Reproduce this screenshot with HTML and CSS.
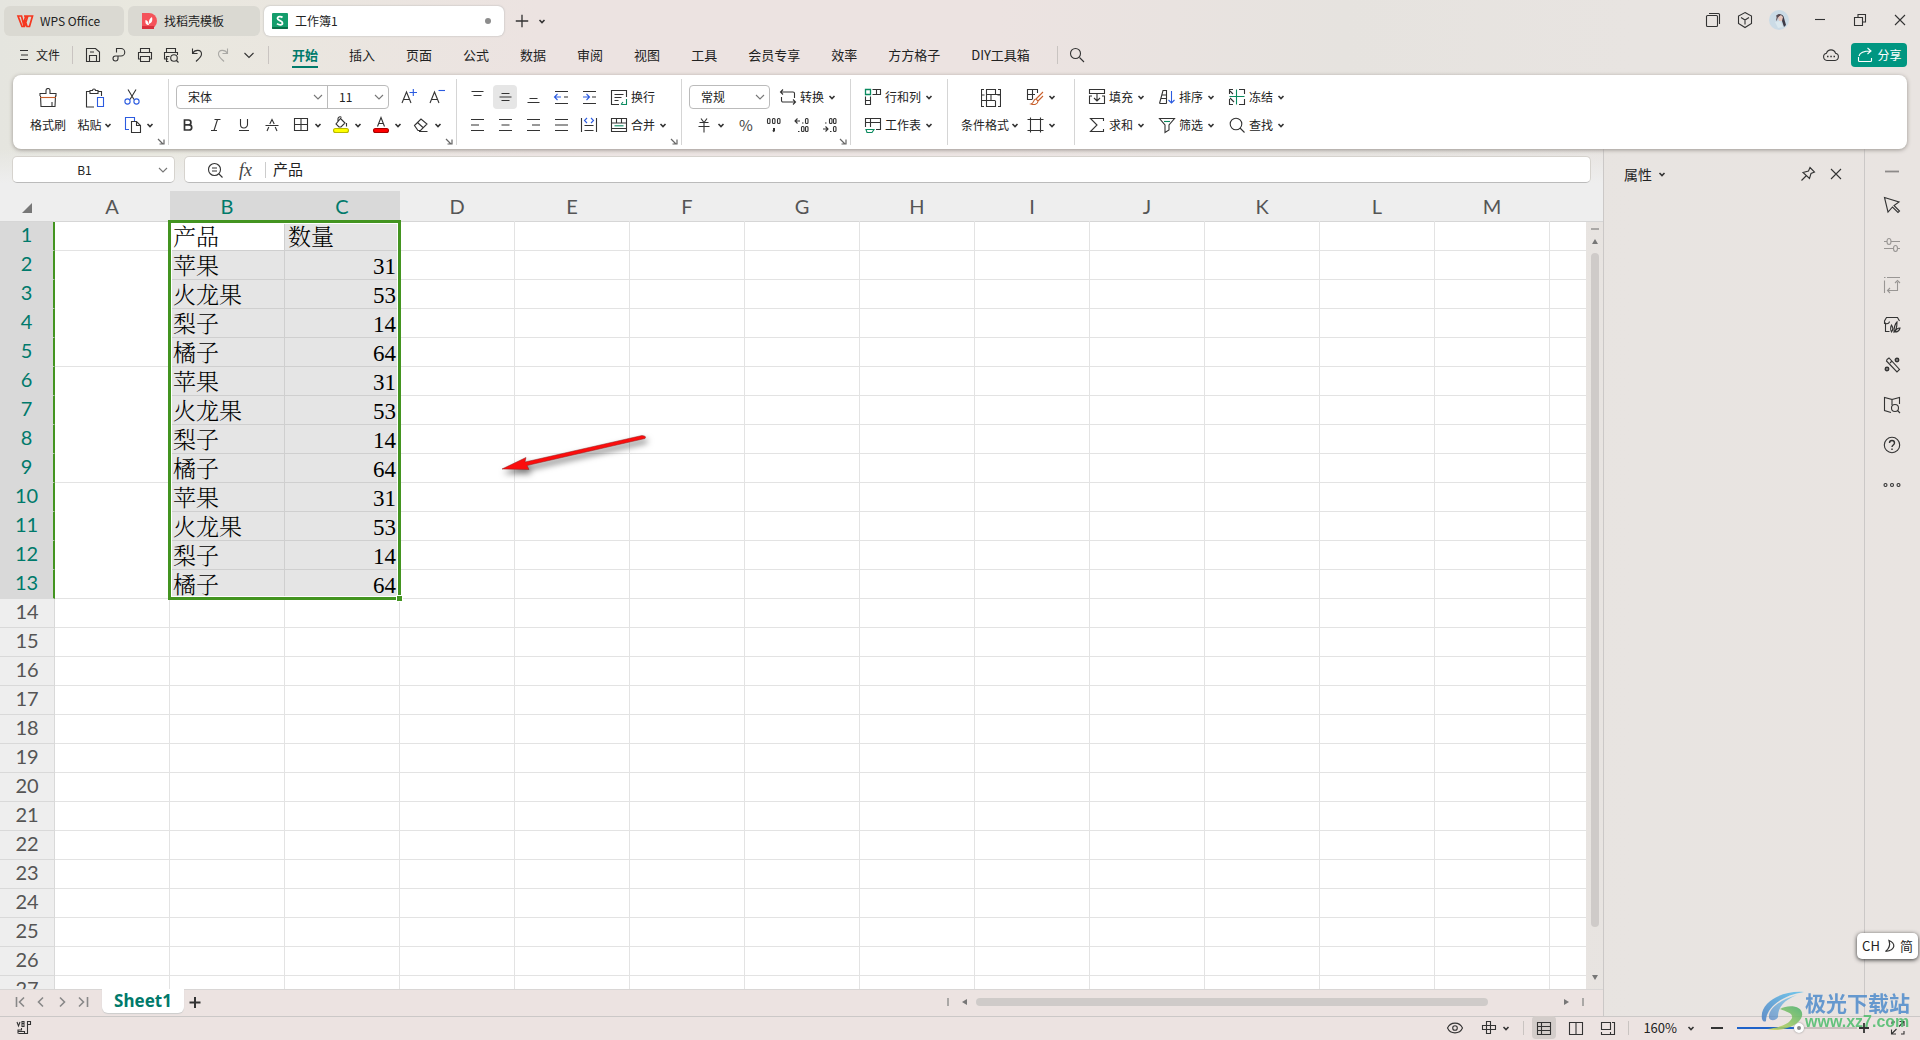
FILE: index.html
```
<!DOCTYPE html>
<html lang="zh-CN">
<head>
<meta charset="utf-8">
<title>工作簿1 - WPS Office</title>
<link rel="stylesheet" href="styles.css">
</head>
<body>
<svg class="sprite" aria-hidden="true">
  <symbol id="chev" viewBox="0 0 10 10"><path d="M2.5 4 5 6.5 7.500 4" fill="none" stroke="#333" stroke-width="1.600"/></symbol>
  <symbol id="chev-thin" viewBox="0 0 10 10"><path d="M1 3l4 4 4-4" fill="none" stroke="#777" stroke-width="1.100"/></symbol>
  <symbol id="launch" viewBox="0 0 8 8"><path d="M1 2l5 5M7 2.500V7H2.500" fill="none" stroke="#666" stroke-width="1.200"/></symbol>
</svg>

<header class="titlebar">
  <button class="wtab wtab-home"><svg class="ic" viewBox="0 0 18 18"><path d="M2 4h3.500l2 8L9.500 5h2l-3 9.500H6zM8 4h8.500l-3 10.500H11L9 8" fill="none" stroke="#f5371f" stroke-width="1.700"/></svg>WPS Office</button>
  <button class="wtab wtab-tpl"><svg class="ic logo" viewBox="0 0 18 18"><path d="M2 1h7a8 8 0 0 1 0 16H2z" fill="#f4535a"/><path d="M2 14h12v3H2z" fill="#d9303c"/><path d="M9 13c-3 0-4-2-3.500-5 2 .5 3 2 3.500 5zM9 12c-.5-4 1-6 3-7 1 4-.5 6-3 7z" fill="#fff"/></svg>找稻壳模板</button>
  <button class="wtab wtab-active"><svg class="ic logo" viewBox="0 0 18 18"><rect x="1" y="1" width="16" height="16" rx="1" fill="#149d6c"/><path d="M1 15h16v1a1 1 0 0 1-1 1H2a1 1 0 0 1-1-1z" fill="#0a7049"/><path d="M11.500 5.500C10 4 6.500 4.200 6.500 6.500S11.500 8.500 11.500 11 8 13.200 6 11.600" fill="none" stroke="#fff" stroke-width="1.800"/></svg><span>工作簿1</span><i class="dot"></i></button>
  <button class="btn" aria-label="新建"><svg class="ic" viewBox="0 0 18 18"><path d="M9 2v14M2 9h14" stroke-width="1.500"/></svg></button>
  <button class="btn-s" aria-label="更多"><svg class="cv"><use href="#chev"/></svg></button>
  <div class="winctl">
    <button class="btn32" aria-label="窗口"><svg class="ic" viewBox="0 0 18 18"><rect x="2.500" y="4.500" width="11" height="11" rx="1"/><path d="M5 2.500h9.500a1 1 0 0 1 1 1V13"/></svg></button>
    <button class="btn32" aria-label="应用"><svg class="ic" viewBox="0 0 18 18"><path d="M9 1.500l6.500 3.500v7.500L9 16.500l-6.500-4V5zM5 6.500L9 9l4-2.500M9 9v4.500"/></svg></button>
    <button class="btn-av" aria-label="账户"><svg viewBox="0 0 20 20" width="20" height="20"><circle cx="10" cy="10" r="10" fill="#cbdbe6"/><path d="M7 6c2-3 8-2 8 2l2 7-2 2-2-6z" fill="#3d3a46"/><path d="M9 7l3-2 2 2-1 4-3 0z" fill="#e7c6bd"/><path d="M8 5l4-1-3 3-1 3-1 1z" fill="#5c4a50"/><path d="M6 12l5-1 3 6-5 1z" fill="#dbe8ee"/></svg></button>
    <button class="btn40" aria-label="最小化"><svg class="ic" viewBox="0 0 18 18"><path d="M4 8.500h10"/></svg></button>
    <button class="btn40" aria-label="还原"><svg class="ic" viewBox="0 0 18 18"><path d="M3.500 6.500h8v8h-8zM7 6V3.500h7.500v7.500H12"/></svg></button>
    <button class="btn40" aria-label="关闭"><svg class="ic" viewBox="0 0 18 18"><path d="M4 4l10 10M14 4L4 14"/></svg></button>
  </div>
</header>

<nav class="menubar">
  <button class="filebtn"><svg class="ic10" viewBox="0 0 10 12"><path d="M1 1.500h8M2 6h7M1 10.500h8"/></svg>文件</button>
  <i class="vsep"></i>
  <div class="quick">
    <button aria-label="保存"><svg class="ic" viewBox="0 0 18 18"><path d="M3 2.500h8.500L15.500 6v9.500h-13v-13zM5.500 15V9.500h7V15M6 6h4"/></svg></button>
    <button aria-label="输出"><svg class="ic" viewBox="0 0 18 18"><path d="M6.500 6.500V2.500h4.500a3.500 3.500 0 0 1 0 7.500H5.500a2.500 2.500 0 1 0 2.500 2.500V10"/></svg></button>
    <button aria-label="打印"><svg class="ic" viewBox="0 0 18 18"><path d="M4.500 6V2.500h9V6M4.500 13h-2V6.500h13V13h-2M4.500 10.500h9v5h-9z"/></svg></button>
    <button aria-label="预览"><svg class="ic" viewBox="0 0 18 18"><path d="M4.500 6V2.500h9V6M6 13H2.500V6.500h13V9M6.500 15.500h-2v-5h3M14.500 14.500l2 2"/><circle cx="12" cy="12" r="3.300"/></svg></button>
    <button aria-label="撤销"><svg class="ic" viewBox="0 0 18 18"><path d="M4.500 2.500v5h5M4.500 7.500C7 3 13.500 3.500 13.500 8c0 3-3 5-5.500 7.500"/></svg></button>
    <button aria-label="恢复"><svg class="ic faint" viewBox="0 0 18 18"><path d="M13.500 2.500v5h-5M13.500 7.500C11 3 4.500 3.500 4.500 8c0 3 3 5 5.500 7.500"/></svg></button>
    <button aria-label="更多命令"><svg class="ic" viewBox="0 0 18 18"><path d="M4.500 7L9 11.500 13.500 7"/></svg></button>
  </div>
  <i class="vsep"></i>
  <div class="mtabs">
    <button class="on">开始</button><button>插入</button><button>页面</button><button>公式</button><button>数据</button><button>审阅</button><button>视图</button><button>工具</button><button>会员专享</button><button>效率</button><button>方方格子</button><button>DIY工具箱</button>
  </div>
  <i class="vsep"></i>
  <button class="search" aria-label="搜索"><svg class="ic" viewBox="0 0 18 18"><circle cx="7.500" cy="7.500" r="5"/><path d="M11.500 11.500L16 16"/></svg></button>
  <button class="cloud" aria-label="云同步"><svg class="ic" viewBox="0 0 18 18"><path d="M5 14.500a3.700 3.700 0 0 1-.5-7.300 4.700 4.700 0 0 1 9 0 3.700 3.700 0 0 1-.5 7.300z"/><path d="M5 10.500h1.500M8.300 10.500h1.500M11.500 10.500H13" stroke-width="1.600"/></svg></button>
  <button class="share"><svg class="ic" viewBox="0 0 18 18"><path d="M2.500 11v3.500a1 1 0 0 0 1 1h11a1 1 0 0 0 1-1V12M3 10c1-4 5-5 11.500-5M11.500 2l3.500 3-3.500 3"/></svg>分享</button>
</nav>

<section class="ribbon">
  <div class="grp g-clip">
    <button class="big w48"><svg class="ic20" viewBox="0 0 20 20"><path d="M2 8V5.500h6V2.500a2 2 0 0 1 4 0v3h6V8l-.5 0L17 18.500H3L2.500 8"/><path d="M2 9.500h16" stroke="#c8602c"/><path d="M14 18v-4"/></svg><span>格式刷</span></button>
    <button class="big w46"><svg class="ic20" viewBox="0 0 20 20"><path d="M9 19H1.500V3.500H5M13 3.500h3.500V8M5 2.500h2.500a1.500 1.500 0 0 1 3 0H13v3H5z"/><path d="M12.500 9.500h6v9h-6z" stroke="#2b5be0"/></svg><span>粘贴<svg class="cv"><use href="#chev"/></svg></span></button>
    <div class="rows">
      <div class="row"><button class="sq" aria-label="剪切"><svg class="ic" viewBox="0 0 18 18"><path d="M5 1.500l6 10M13 1.500l-6 10"/><circle cx="4.500" cy="13.500" r="2.600" stroke="#2b5be0"/><circle cx="13.500" cy="13.500" r="2.600" stroke="#2b5be0"/></svg></button></div>
      <div class="row"><button class="combo" aria-label="复制"><svg class="ic" viewBox="0 0 18 18"><path d="M5 13.500H1.500v-12h9V5" stroke="#2b5be0"/><path d="M7.500 5.500h5l4 4v7h-9zM12.500 5.500v4h4"/></svg><svg class="cv"><use href="#chev"/></svg></button></div>
    </div>
    <button class="launch" aria-label="剪贴板选项"><svg><use href="#launch"/></svg></button>
  </div>

  <div class="grp g-font">
    <div class="rows">
      <div class="row">
        <div class="fontbox">
          <label class="pick p-font"><select aria-label="字体"><option>宋体</option></select><svg class="cvt"><use href="#chev-thin"/></svg></label>
          <label class="pick p-size"><select aria-label="字号"><option>11</option></select><svg class="cvt"><use href="#chev-thin"/></svg></label>
        </div>
        <button class="sq" aria-label="增大字号"><svg class="ic" viewBox="0 0 18 18"><path d="M2 15L6.500 4 11 15M3.500 11.500h6"/><path d="M9.500 4.500H17M13.300 1v7" stroke="#2b5be0"/></svg></button>
        <button class="sq" aria-label="减小字号"><svg class="ic" viewBox="0 0 18 18"><path d="M2 15L6.500 4 11 15M3.500 11.500h6"/><path d="M10.500 2.500H17" stroke="#2b5be0"/></svg></button>
      </div>
      <div class="row">
        <button class="sq" aria-label="加粗"><svg class="ic" viewBox="0 0 18 18"><path d="M5.500 4h4a2.400 2.400 0 0 1 0 4.800h-4zM5.500 8.800h4.600a2.600 2.600 0 0 1 0 5.200H5.500z" stroke-width="1.700"/></svg></button>
        <button class="sq" aria-label="倾斜"><svg class="ic" viewBox="0 0 18 18"><path d="M7.500 3.500h6M4 14.500h6M10.500 3.500l-3.500 11"/></svg></button>
        <button class="sq" aria-label="下划线"><svg class="ic" viewBox="0 0 18 18"><path d="M5.500 3v5.500a3.500 3.500 0 0 0 7 0V3M4 14.500h10"/></svg></button>
        <button class="sq" aria-label="删除线"><svg class="ic" viewBox="0 0 18 18"><path d="M2.500 9.500h13M6.800 8L9 3.500 11.200 8M5.800 11l-1.800 4M12.200 11l1.800 4"/></svg></button>
        <button class="combo" aria-label="边框"><svg class="ic" viewBox="0 0 18 18"><path d="M2.500 2.500h13v12h-13zM9 2.500v12M2.500 8.500h13"/></svg><svg class="cv"><use href="#chev"/></svg></button>
        <button class="combo" aria-label="填充色"><svg class="ic" viewBox="0 0 18 18"><path d="M8.500 2.500l4.500 4.500-4 4H7L4 8zM6 5.500V3a2 2 0 0 1 3.500-1.500M14.500 7v3.500"/><rect x="1.500" y="12.500" width="15" height="4" rx="2" fill="#ff0" stroke="#b9b900"/></svg><svg class="cv"><use href="#chev"/></svg></button>
        <button class="combo" aria-label="字体颜色"><svg class="ic" viewBox="0 0 18 18"><path d="M5.500 10.500L9 1.500l3.500 9M6.500 7.500h5"/><rect x="1.500" y="12.500" width="15" height="4" rx="2" fill="#f00" stroke="#a90000"/></svg><svg class="cv"><use href="#chev"/></svg></button>
        <button class="combo" aria-label="清除"><svg class="ic" viewBox="0 0 18 18"><path d="M2.500 9.500L9 3l6 5-6.500 6.500H6zM5.500 6.500l6 5.500M7 15.500h8.500"/></svg><svg class="cv"><use href="#chev"/></svg></button>
      </div>
    </div>
    <button class="launch" aria-label="字体选项"><svg><use href="#launch"/></svg></button>
  </div>

  <div class="grp g-align">
    <div class="rows">
      <div class="row">
        <button class="sq" aria-label="顶端对齐"><svg class="ic" viewBox="0 0 18 18"><path d="M3.500 3.500h12M5.500 7.500h8"/></svg></button>
        <button class="sq pressed" aria-label="垂直居中"><svg class="ic" viewBox="0 0 18 18"><path d="M5.500 5.500h8M3.500 9h12M5.500 12.500h8"/></svg></button>
        <button class="sq" aria-label="底端对齐"><svg class="ic" viewBox="0 0 18 18"><path d="M5.500 10.500h8M3.500 14.500h12"/></svg></button>
        <button class="sq" aria-label="减少缩进"><svg class="ic" viewBox="0 0 18 18"><path d="M3 3.500h13M12 9h4M3 15.500h13"/><path d="M2.500 9H9M5.500 6l-3 3 3 3" stroke="#2b5be0"/></svg></button>
        <button class="sq" aria-label="增加缩进"><svg class="ic" viewBox="0 0 18 18"><path d="M3 3.500h13M12 9h4M3 15.500h13"/><path d="M3 9h6.500M6.500 6l3 3-3 3" stroke="#2b5be0"/></svg></button>
        <button class="tool ml7"><svg class="ic" viewBox="0 0 18 18"><path d="M9 16.500H1.500v-14h15V9M4.500 6.500h9M4.500 9.500h7M4.500 12.500h4"/><path d="M16.500 11v5.500h-5M13 14l-2 2.500" stroke="#0a8a5f"/></svg>换行</button>
      </div>
      <div class="row">
        <button class="sq" aria-label="左对齐"><svg class="ic" viewBox="0 0 18 18"><path d="M3 3.500h13M3 9h8M3 14.500h13"/></svg></button>
        <button class="sq" aria-label="水平居中"><svg class="ic" viewBox="0 0 18 18"><path d="M3 3.500h13M5.500 9h8M3 14.500h13"/></svg></button>
        <button class="sq" aria-label="右对齐"><svg class="ic" viewBox="0 0 18 18"><path d="M3 3.500h13M8 9h8M3 14.500h13"/></svg></button>
        <button class="sq" aria-label="两端对齐"><svg class="ic" viewBox="0 0 18 18"><path d="M3 3.500h13M3 9h13M3 14.500h13"/></svg></button>
        <button class="sq" aria-label="分散对齐"><svg class="ic" viewBox="0 0 18 18"><path d="M1.500 2v14M16.500 2v14M4.500 9.500h9M4.500 14.500h9"/><path d="M7 2L4.500 4.500 7 7M11 2l2.500 2.500L11 7" stroke="#2b5be0"/></svg></button>
        <button class="tool ml7"><svg class="ic" viewBox="0 0 18 18"><path d="M1.500 2.500h15v13h-15zM1.500 7h15M1.500 12.500h15M6.500 2.500V7M11.500 2.500V7"/><path d="M4.500 9.800h9" stroke="#0a8a5f"/></svg>合并<svg class="cv"><use href="#chev"/></svg></button>
      </div>
    </div>
    <button class="launch" aria-label="对齐选项"><svg><use href="#launch"/></svg></button>
  </div>

  <div class="grp g-num">
    <div class="rows">
      <div class="row">
        <label class="pick p-num"><select aria-label="数字格式"><option>常规</option></select><svg class="cvt"><use href="#chev-thin"/></svg></label>
        <button class="tool ml9"><svg class="ic" viewBox="0 0 18 18"><path d="M4 1.500l-2.500 2.500L4 6.500M1.500 4h12.500a1.500 1.500 0 0 1 1.500 1.500V10M14 11.500l2.500 2.500-2.500 2.500M16.500 14H4a1.500 1.500 0 0 1-1.500-1.500V9"/></svg>转换<svg class="cv"><use href="#chev"/></svg></button>
      </div>
      <div class="row">
        <button class="combo" aria-label="货币"><svg class="ic" viewBox="0 0 18 18"><path d="M6 2.500l3 4 3-4M4.500 6.500h9M3.500 10.500h11M9 6.500v10"/></svg><svg class="cv"><use href="#chev"/></svg></button>
        <button class="sq num-b" aria-label="百分比">%</button>
        <button class="sq" aria-label="千位分隔"><svg class="ic" viewBox="0 0 18 18"><rect x="2.500" y="2.500" width="2.500" height="5" rx="1"/><rect x="7.500" y="2.500" width="2.500" height="5" rx="1"/><rect x="12.500" y="2.500" width="2.500" height="5" rx="1"/><path d="M9 12v2.500l-1 1" stroke-width="2"/></svg></button>
        <button class="sq" aria-label="增加小数位"><svg class="ic" viewBox="0 0 18 18"><path d="M2 5h5M4.500 2.500L2 5l2.500 2.500M9 7h1.500M5 15.500h1.500"/><rect x="12.500" y="2.500" width="2.500" height="5" rx="1"/><rect x="8.500" y="10.500" width="2.500" height="5" rx="1"/><rect x="12.500" y="10.500" width="2.500" height="5" rx="1"/></svg></button>
        <button class="sq" aria-label="减少小数位"><svg class="ic" viewBox="0 0 18 18"><path d="M2 13h5M4.500 10.500L7 13l-2.500 2.500M9 15.500h1.500M4 7h1.500"/><rect x="12.500" y="10.500" width="2.500" height="5" rx="1"/><rect x="8.500" y="2.500" width="2.500" height="5" rx="1"/><rect x="12.500" y="2.500" width="2.500" height="5" rx="1"/></svg></button>
      </div>
    </div>
    <button class="launch" aria-label="数字选项"><svg><use href="#launch"/></svg></button>
  </div>

  <div class="grp g-rows">
    <div class="rows">
      <div class="row"><button class="tool"><svg class="ic" viewBox="0 0 18 18"><path d="M1.500 1.500h5v5h-5z" stroke="#0a8a5f" stroke-width="1.300"/><path d="M8.500 1.500h8v5h-8M12.500 1.500v5M1.500 8.500v8h5v-8M1.500 12.500h5"/></svg>行和列<svg class="cv"><use href="#chev"/></svg></button></div>
      <div class="row"><button class="tool"><svg class="ic" viewBox="0 0 18 18"><path d="M1.500 11V2.500h15v11H12M1.500 6.500h15M6.500 2.500V11"/><path d="M2 13.500h8l-2 3H3z" stroke="#0a8a5f"/></svg>工作表<svg class="cv"><use href="#chev"/></svg></button></div>
    </div>
  </div>

  <div class="grp g-fmt">
    <button class="big"><svg class="ic20" viewBox="0 0 20 20"><path d="M3 1.500H.5v17H3M17 1.500h2.500v17H17M5.500 1.500h9v5h-9zM5.500 6.500v6M14.500 13v5.500h-9V13M.5 7h3M16.500 7h3M.5 12.500h14M10 6.500h9.500M10 7v6"/></svg><span>条件格式<svg class="cv"><use href="#chev"/></svg></span></button>
    <div class="rows">
      <div class="row"><button class="combo" aria-label="表格样式"><svg class="ic" viewBox="0 0 18 18"><path d="M6 11.500H1.500v-10h10V5M1.500 6.500H9M6.500 1.500v10"/><path d="M17 4l-7 7M17 8l-5 5M10 11c-3 0-1.500 4-5 5 3 1 7 .5 7-3z" stroke="#c8602c"/></svg><svg class="cv"><use href="#chev"/></svg></button></div>
      <div class="row"><button class="combo" aria-label="单元格样式"><svg class="ic" viewBox="0 0 18 18"><path d="M4.500 1.500v15M14.500 1.500v15M1.500 3.500h16M1.500 14.500h16"/></svg><svg class="cv"><use href="#chev"/></svg></button></div>
    </div>
  </div>

  <div class="grp g-edit">
    <div class="rows">
      <div class="row g12">
        <button class="tool"><svg class="ic" viewBox="0 0 18 18"><path d="M1.500 5.500v-4h15v4zM4 8H1.500v7.500h15V8H14M9 5.500v7M6 10l3 3 3-3"/></svg>填充<svg class="cv"><use href="#chev"/></svg></button>
        <button class="tool"><svg class="ic" viewBox="0 0 18 18"><path d="M1.500 15.500L5 2.500h3.500v13M3 10.500h5.500M4 7h4.500M1.500 15.500h7"/><path d="M13.500 3v12M10.500 12l3 3 3-3" stroke="#2b5be0"/></svg>排序<svg class="cv"><use href="#chev"/></svg></button>
        <button class="tool"><svg class="ic" viewBox="0 0 18 18"><path d="M5 1.500H1.500V6M11 1.500h5.500V6M1.500 11v5.500H5M11 16.500h5.500V11M2 3l3 3M2 10l4 4"/><path d="M1.500 8.500h15M8.500 1.500v15" stroke="#0a8a5f"/></svg>冻结<svg class="cv"><use href="#chev"/></svg></button>
      </div>
      <div class="row g12">
        <button class="tool"><svg class="ic" viewBox="0 0 18 18"><path d="M15.500 5V2.500H2.500L9 9l-6.500 6.500h13V13"/></svg>求和<svg class="cv"><use href="#chev"/></svg></button>
        <button class="tool"><svg class="ic" viewBox="0 0 18 18"><path d="M1.500 2.500h15L11 9v5l-4 2.500V9z"/><path d="M6 5.500h6" stroke="#0a8a5f"/></svg>筛选<svg class="cv"><use href="#chev"/></svg></button>
        <button class="tool"><svg class="ic" viewBox="0 0 18 18"><circle cx="8" cy="8" r="5.800"/><path d="M12 12l4.500 4.500"/></svg>查找<svg class="cv"><use href="#chev"/></svg></button>
      </div>
    </div>
  </div>
</section>

<div class="work">
  <main class="left">
    <div class="fbar">
      <div class="namebox"><input type="text" value="B1" aria-label="名称框"><svg class="cvt"><use href="#chev-thin"/></svg></div>
      <div class="formula">
        <button class="btn30" aria-label="缩小"><svg class="ic" viewBox="0 0 18 18"><circle cx="8.500" cy="8.500" r="6"/><path d="M6 7h5M6 10h5M13 13l3.500 3.500"/></svg></button>
        <button class="btn30 fx" aria-label="插入函数"><i>fx</i></button>
        <i class="fsep"></i>
        <input type="text" value="产品" aria-label="编辑栏">
      </div>
    </div>
    <div class="sheet">
      <div class="gridwrap">
        <table class="grid"><thead><tr id="cols"></tr></thead><tbody id="rows"></tbody></table>
        <div class="selection"><i class="handle"></i></div>
        <svg class="arrow" viewBox="0 0 160 48"><path d="M6 38L30 26.500 29 31 146 4.500q5 .5 3 3L31 34.500l2 4z" fill="#fb0d0d" stroke="#8d2020" stroke-width=".5"/></svg>
      </div>
      <div class="vscroll"><div class="vcap"></div><i class="vdash"></i><i class="up"></i><i class="vthumb"></i><i class="down"></i></div>
    </div>
    <div class="sheetbar">
      <button aria-label="首个"><svg class="ic" viewBox="0 0 18 18"><path d="M5.500 4v10M13 4.500L8.500 9l4.500 4.500"/></svg></button>
      <button aria-label="上一个"><svg class="ic" viewBox="0 0 18 18"><path d="M11 4.500L6.500 9l4.500 4.500"/></svg></button>
      <button aria-label="下一个"><svg class="ic" viewBox="0 0 18 18"><path d="M7 4.500L11.500 9 7 13.500"/></svg></button>
      <button aria-label="末个"><svg class="ic" viewBox="0 0 18 18"><path d="M5 4.500L9.500 9 5 13.500M13.500 4v10"/></svg></button>
      <button class="stab">Sheet1</button>
      <button class="plus" aria-label="新建工作表"><svg class="ic" viewBox="0 0 18 18"><path d="M9 4v11M3.500 9.500h11" stroke-width="2"/></svg></button>
      <div class="hscroll"><i class="hm"></i><i class="hl"></i><i class="hthumb"></i><i class="hr"></i><i class="hm"></i></div>
    </div>
  </main>
  <aside class="pane">
    <div class="panehead"><button class="ptitle">属性<svg class="cv"><use href="#chev"/></svg></button>
      <button class="btn28 push" aria-label="固定"><svg class="ic" viewBox="0 0 18 18"><path d="M11 2.500l4.500 4.500-3.500 1.500-1.500 5L4 7.500 9.500 6zM7 11l-4.500 4.500"/></svg></button>
      <button class="btn28" aria-label="关闭属性"><svg class="ic" viewBox="0 0 18 18"><path d="M4 4l10 10M14 4L4 14"/></svg></button>
    </div>
  </aside>
  <aside class="side">
    <button class="first" aria-label="收起"><svg class="ic" viewBox="0 0 18 18"><path d="M2 9.500h14" stroke="#8d8a89" stroke-width="1.800"/></svg></button>
    <button aria-label="选择"><svg class="ic" viewBox="0 0 18 18"><path d="M1.500 1.500l14.500 4.500-5 3.500 5.500 5.500-1.500 1.500-5.500-5.500L5 16z"/></svg></button>
    <button aria-label="设置"><svg class="ic faint2" viewBox="0 0 18 18"><path d="M1 5.500h3M8 5.500h9M1 12.500h9M14.500 12.500H17"/><ellipse cx="6" cy="5.500" rx="2" ry="3"/><ellipse cx="12.500" cy="12.500" rx="2" ry="3"/></svg></button>
    <button aria-label="对象"><svg class="ic faint2" viewBox="0 0 18 18"><path d="M1 1.500h1.500M4 1.500h13M1.500 4.500V17M14.500 6v8.500H5M12 7l2.500-2.500L17 7M7 12l-2.500 2.500L7 17"/></svg></button>
    <button aria-label="美化"><svg class="ic" viewBox="0 0 18 18"><path d="M1.500 8V5l2-3.500h11l2 3.500M1.500 5.500c0 3 4.500 3 5 0M2.500 8v7.500h4"/><path d="M8.500 16c-1.500-3-1-5 0-7 1.500 2 1.500 5 0 7zM11 16c0-4 1-8 3-10 0 4-.5 8-3 10zM12 16c1-3 3-4 5-4-.5 2-2.500 4-5 4z"/></svg></button>
    <button aria-label="魔法工具"><svg class="ic" viewBox="0 0 18 18"><path d="M4 3.500l2-1.500 10.500 11.500-2.500 2.500L3.500 5zM7 7l2-2"/><circle cx="14" cy="4" r="1.600" stroke-width="1.700"/><circle cx="4" cy="13" r="1.600" stroke-width="1.700"/></svg></button>
    <button aria-label="查阅"><svg class="ic" viewBox="0 0 18 18"><path d="M9 9V3.500L1.500 1.500v13L8 16.500M9 3.500l7.500-2V8M14.500 14.500l2.500 2.500"/><circle cx="12" cy="12" r="3.500"/></svg></button>
    <button aria-label="帮助"><svg class="ic" viewBox="0 0 18 18"><circle cx="9" cy="9" r="7.700"/><path d="M6.500 7c0-3.300 5-3.300 5 0 0 2-2.500 2-2.500 4M9 12.500V14" stroke-width="1.400"/></svg></button>
    <button aria-label="更多"><svg class="ic" viewBox="0 0 18 18"><circle cx="2.500" cy="9" r="1.500"/><circle cx="9" cy="9" r="1.500"/><circle cx="15.500" cy="9" r="1.500"/></svg></button>
  </aside>
</div>

<footer class="status">
  <button class="btn28" aria-label="宏"><svg class="ic" viewBox="0 0 18 18"><path d="M2 3l1.500 4L5 3M7 7.500v-5h2v2H7h2v3zM12.500 15V2.500h3v3h-3M3 14.500v-3.500h3.500v-2M3.500 14.500h6v-2H3M8 14.500h4.500"/></svg></button>
  <button class="btn28 push" aria-label="护眼"><svg class="ic" viewBox="0 0 18 18"><path d="M1.500 9C4.500 2.500 13.500 2.500 16.500 9 13.500 15.500 4.500 15.500 1.500 9z"/><circle cx="9" cy="9" r="2.300"/></svg></button>
  <button class="combo" aria-label="阅读"><svg class="ic" viewBox="0 0 18 18"><path d="M6.500 6.500v-4h4v4h5v4h-5v4h-4v-4h-4v-4zM6.500 6.500h4v4h-4z"/></svg><svg class="cv"><use href="#chev"/></svg></button>
  <i class="vsep"></i>
  <button class="view on" aria-label="普通"><svg class="ic" viewBox="0 0 18 18"><path d="M2.500 3.500h13v12h-13zM2.500 7.500h13M2.500 11.500h13M6.500 3.500v12"/></svg></button>
  <button class="view" aria-label="分页"><svg class="ic" viewBox="0 0 18 18"><path d="M2.500 3.500h13v12h-13zM9 3.500v12"/></svg></button>
  <button class="view" aria-label="页面布局"><svg class="ic" viewBox="0 0 18 18"><path d="M2.500 3.500h9v7h-9zM2.500 13V15.500h13v-12H13M11.500 13V15"/></svg></button>
  <i class="vsep"></i>
  <button class="zoomv">160%<svg class="cv"><use href="#chev"/></svg></button>
  <button class="btn28" aria-label="缩小"><svg class="ic" viewBox="0 0 18 18"><path d="M3 9h12" stroke-width="2"/></svg></button>
  <input class="slider" type="range" min="0" max="100" value="52" aria-label="缩放">
  <button class="pm" aria-label="放大"><svg class="ic" viewBox="0 0 18 18"><path d="M9 4v10M4 9h10" stroke-width="1.800"/></svg></button>
  <button class="full" aria-label="全屏"><svg class="ic" viewBox="0 0 18 18"><path d="M10.500 2.500H15V7M15 2.500L10 7.500M2.500 10.500V15H7M2.500 15l5-5M3 5V3h3M15 12v3h-3"/></svg></button>
</footer>

<div class="ime">CH <svg viewBox="0 0 12 14" width="12" height="14"><path d="M5 1.500c6 2.500 8 9-3.500 11C6 9 6.500 6 5 1.500z" fill="none" stroke="#333" stroke-width="1.200"/></svg> 简</div>
<div class="mark">
  <svg viewBox="0 0 44 40" width="44" height="40"><defs><linearGradient id="mb" x1="0" y1="1" x2="1" y2="0"><stop offset="0" stop-color="#4a80c4"/><stop offset="1" stop-color="#5fc3ee"/></linearGradient><linearGradient id="mg" x1="0" y1="1" x2="1" y2="0"><stop offset="0" stop-color="#d4da5c"/><stop offset="1" stop-color="#45b06a"/></linearGradient></defs><path d="M43 1C22-1-2 11 1 28c1 3 3 3 4 2C5 16 22 4 43 1z" fill="url(#mb)"/><path d="M36 4C18 9 7 18 8 27c2 4 8 2 9-1C17 16 23 9 36 4z" fill="url(#mb)" opacity=".8"/><path d="M19 18c9-5 24-3 22 7C39 34 20 42 6 38c10-1 22-4 25-11 1-5-5-6-12-9z" fill="url(#mg)"/></svg>
  <div><b>极光下载站</b><span>www.xz7.com</span></div>
</div>
<script src="grid.js"></script>
</body>
</html>
```
FILE: styles.css
```
* { box-sizing: border-box; }
body {
  margin: 0; height: 100vh; display: flex; flex-direction: column; overflow: hidden; position: relative;
  font: 12px/16px "Noto Sans CJK SC", sans-serif; color: #222;
  background: linear-gradient(90deg, #e5e5df 0, #e9e8df 8%, #ece3e1 28%, #ece3e1 52%, #e6e3df 70%, #e8e4e1 85%, #e9e4e1 100%);
}
button { border: 0; padding: 0; margin: 0; background: none; font: inherit; color: inherit; display: flex; align-items: center; justify-content: center; flex: none; }
input, select { font: inherit; color: inherit; border: 0; background: none; outline: 0; padding: 0; margin: 0; min-width: 0; }
i { font-style: normal; flex: none; }
.sprite { display: none; }
.ic { width: 18px; height: 18px; flex: none; fill: none; stroke: #333; stroke-width: 1.1; }
.ic20 { width: 20px; height: 20px; flex: none; fill: none; stroke: #333; stroke-width: 1.1; }
.ic10 { width: 10px; height: 12px; fill: none; stroke: #333; stroke-width: 1.1; }
.logo { stroke: none; }
.faint { stroke: #aaa9a5; }
.faint2 { stroke: #999694; }
.cv, .cvt { width: 10px; height: 10px; flex: none; }
.push { margin-left: auto; }

.titlebar { display: flex; height: 36px; padding: 6px 0 0 4px; flex: none; }
.titlebar .btn { width: 36px; }
.titlebar .btn .ic { width: 16px; }
.btn-s { width: 4px; }
.wtab { height: 30px; border-radius: 6px; background: #dad9d2; justify-content: flex-start; gap: 6px; padding-left: 12px; margin-right: 4px; }
.wtab-home { width: 120px; }
.wtab-tpl { width: 132px; }
.wtab-active { width: 240px; background: #fff; padding: 0 13px 0 7px; box-shadow: 0 0 2px #aaa; margin-right: 0; }
.dot { width: 6px; height: 6px; border-radius: 3px; background: #8c8c8c; margin-left: auto; }
.winctl { display: flex; margin-left: auto; align-items: center; height: 28px; }
.btn32 { width: 32px; }
.btn-av { width: 36px; margin-right: 3px; }
.btn40 { width: 40px; }

.menubar { display: flex; align-items: center; height: 39px; flex: none; padding: 0 13px 2px 19px; font-size: 13px; }
.filebtn { font-size: 12px; gap: 7px; }
.vsep { width: 1px; height: 18px; background: #c9c4c1; }
.menubar .vsep:nth-of-type(1) { margin-left: 12px; }
.quick { display: flex; margin: 0 6px 0 7px; }
.quick button { width: 26px; height: 26px; }
.mtabs { display: flex; gap: 31px; margin: 0 27px 0 23px; }
.mtabs button { height: 26px; border-bottom: 2px solid transparent; border-top: 2px solid transparent; }
.mtabs .on { color: #007a6b; font-weight: 700; border-bottom-color: #007a6b; }
.search { margin-left: 10px; }
.cloud { margin-left: auto; }
.share { width: 56px; height: 24px; margin-left: 11px; background: #009681; color: #fff; border-radius: 4px; gap: 3px; font-size: 12px; }
.share .ic { stroke: #fff; }

.ribbon { display: flex; height: 74px; margin: 0 13px; background: #fff; border-radius: 8px; box-shadow: 0 1px 4px #9a9590; flex: none; position: relative; z-index: 1; }
.grp { display: flex; position: relative; padding-top: 10px; }
.grp::after { content: ""; width: 1px; height: 66px; background: #d5d5d5; margin-top: -6px; margin-left: auto; }
.g-edit::after { display: none; }
.g-clip { width: 156px; padding-left: 11px; }
.g-font { width: 288px; padding-left: 5px; }
.g-align { width: 225px; padding-left: 6px; }
.g-num { width: 169px; padding-left: 7px; }
.g-num .combo { margin-right: 3px; }
.g-rows { width: 97px; padding-left: 13px; }
.g-fmt { width: 127px; padding-left: 13px; }
.g-edit { padding-left: 13px; }
.rows { display: flex; flex-direction: column; gap: 4px; }
.row { display: flex; height: 24px; align-items: center; }
.g12 { gap: 12px; }
.big { flex-direction: column; height: 52px; gap: 7px; padding-top: 3px; justify-content: flex-start; }
.big span { display: flex; align-items: center; gap: 1px; height: 20px; }
.w48 { width: 48px; }
.w46 { width: 46px; }
.sq { width: 28px; height: 24px; border-radius: 4px; }
.num-b { font-size: 15px; color: #444; }
.pressed { background: #e6e6e6; width: 24px; margin: 0 2px; }
.combo { height: 24px; padding: 0 3px 0 6px; gap: 3px; }
.tool { height: 24px; gap: 3px; }
.ml7 { margin-left: 7px; }
.ml9 { margin-left: 9px; }
.launch { position: absolute; right: 4px; bottom: 4px; }
.launch svg { width: 8px; height: 8px; }
.fontbox { display: flex; width: 213px; height: 24px; border: 1px solid #bbb; border-radius: 4px; margin: 0 6px 0 2px; }
.pick { display: grid; align-items: center; }
.pick > * { grid-area: 1 / 1; }
.pick select { appearance: none; width: 100%; height: 100%; padding-left: 11px; }
.pick .cvt { justify-self: end; margin-right: 4px; pointer-events: none; }
.p-font { width: 151px; border-right: 1px solid #bbb; }
.p-size { flex: 1; }
.p-num { width: 81px; height: 24px; border: 1px solid #bbb; border-radius: 4px; }

.work { display: flex; flex: 1; min-height: 0; }
.left { flex: 1; min-width: 0; display: flex; flex-direction: column; }
.fbar { display: flex; gap: 9px; height: 42px; padding: 7px 12px 8px; background: linear-gradient(#eee0, #eee 34px); flex: none; }
.namebox, .formula { display: flex; align-items: center; background: #fff; border-radius: 5px; border: 1px solid #d6d3ce; border-bottom-color: #bbb; }
.namebox { width: 163px; padding: 0 6px; }
.namebox input { flex: 1; text-align: center; padding-right: 16px; width: 0; padding-left: 8px; }
.formula { flex: 1; padding-left: 14px; }
.btn30 { width: 31px; }
.fx i { font: italic 18px/18px "Liberation Serif", serif; color: #444; }
.fsep { width: 1px; height: 16px; background: #ccc; margin: 0 7px 0 4px; }
.formula input { flex: 1; font-size: 15px; line-height: 20px; padding-bottom: 2px; }

.sheet { display: flex; flex: 1; min-height: 0; }
.gridwrap { flex: 1; min-width: 0; overflow: hidden; position: relative; background: #fff; }
.grid { border-collapse: separate; border-spacing: 0; table-layout: fixed; width: 1665px; }
.grid th, .grid td { padding: 0; overflow: hidden; white-space: nowrap; border-right: 1px solid #e3e3e3; border-bottom: 1px solid #e3e3e3; }
.grid th { background: #eee; font: 20px/24px Lato, sans-serif; color: #555; }
.grid thead th { width: 115px; height: 31px; border-right-color: #eee; border-bottom-color: #d6d6d6; }
.grid thead th.corner { width: 55px; }
.grid tbody th { height: 29px; line-height: 24px; vertical-align: top; border-color: #d9d9d9; }
.grid thead th.hot { background: #d9d9d9; color: #007a6b; border-right-color: #d9d9d9; }
.grid tbody th.hot { background: #d9d9d9; color: #007a6b; border-right: 2px solid #439420; }
.grid td { height: 29px; font: 300 23px/24px "Liberation Serif", "Noto Serif CJK SC", "Noto Sans CJK SC", serif; color: #000; padding: 4px 3px 0; }
.grid td.pick-c { background: #e5e5e5; border-color: #cfcfcf; }
.grid td.active { background: #fff; }
.grid td.num { text-align: right; }
.grid td.open { border-bottom-color: #fff; }
.corner svg { width: 10px; height: 10px; display: block; margin: 4px auto 0; }
.selection { position: absolute; left: 168px; top: 29px; width: 233px; height: 380px; border: 3px solid #439420; box-shadow: inset 0 0 0 1px #fff; }
.handle { position: absolute; right: -5px; bottom: -5px; width: 7px; height: 7px; background: #439420; border: 1px solid #fff; }
.arrow { position: absolute; left: 496px; top: 240px; width: 160px; height: 48px; filter: drop-shadow(2px 4px 3px #0008); }
.vscroll { width: 17px; display: flex; flex-direction: column; align-items: center; }
.vcap { width: 100%; height: 31px; background: #eee; border-bottom: 1px solid #d6d6d6; flex: none; }
.vdash { width: 8px; height: 2px; background: #aaa8a6; margin-top: 6px; }
.up { border: 3px solid transparent; border-top: 0; border-bottom: 5px solid #777; margin: 9px 0; }
.vthumb { width: 8px; flex: 1; border-radius: 4px; background: #cfcbc9; }
.down { border: 3px solid transparent; border-bottom: 0; border-top: 5px solid #777; margin: 48px 0 9px; }

.sheetbar { display: flex; align-items: flex-start; height: 27px; border-top: 1px solid #d9d6d5; padding-left: 9px; flex: none; background: #ece3e1; }
.sheetbar button { width: 21px; height: 24px; }
.sheetbar .ic { stroke: #888; stroke-width: 1.6; }
.sheetbar .stab { width: 82px; height: 24px; margin: -1px 0 0 9px; background: #fff; border-radius: 0 0 6px 6px; font: 700 17px/22px "Noto Sans", sans-serif; color: #007a6b; box-shadow: 0 1px 1px #ccc; }
.sheetbar .plus .ic { stroke: #333; }
.hscroll { display: flex; align-items: center; width: 656px; margin-left: auto; padding-right: 19px; height: 24px; }
.hm { width: 2px; height: 8px; background: #aaa8a6; }
.hl { border: 3px solid transparent; border-left: 0; border-right: 5px solid #777; margin: 0 9px 0 13px; }
.hthumb { flex: 1; height: 8px; border-radius: 4px; background: #cfcbc9; }
.hr { border: 3px solid transparent; border-right: 0; border-left: 5px solid #777; margin: 0 13px 0 76px; }

.pane { width: 261px; border-left: 1px solid #cbc8c7; }
.panehead { display: flex; height: 50px; align-items: center; padding: 0 14px 0 20px; }
.ptitle { font-size: 14px; gap: 5px; }
.btn28 { width: 28px; height: 24px; }
.side { width: 56px; border-left: 1px solid #cbc8c7; display: flex; flex-direction: column; padding: 8px 1px 0 0; }
.side button { height: 40px; }
.side .first { height: 28px; }

.status { display: flex; align-items: center; height: 24px; border-top: 1px solid #cbc8c7; padding: 0 13px 2px 10px; flex: none; background: #ece3e1; }
.status .combo { margin-left: 5px; }
.status .vsep { height: 14px; margin: 0 8px 0 9px; }
.view { width: 24px; height: 23px; border-radius: 4px; margin-right: 8px; }
.view.on { background: #d3cdca; }
.status .view + .vsep { margin: 0 6px 0 0; }
.zoomv { font-size: 13px; gap: 9px; margin: 0 7px 0 8px; }
.slider { appearance: none; width: 120px; height: 12px; margin: 0 0 0 6px; background: linear-gradient(90deg, #1f62c9 52%, #c9bfbd 52%) center / 100% 2px no-repeat; }
.slider::-webkit-slider-thumb { appearance: none; width: 10px; height: 10px; border-radius: 5px; background: #888; border: 3px solid #fff; box-shadow: 0 0 2px #888; }
.pm { width: 14px; }
.full { width: 18px; margin-left: 18px; }

.ime { position: absolute; right: 2px; bottom: 81px; width: 61px; height: 26px; background: #fff; border-radius: 5px; box-shadow: 0 1px 4px #333; display: flex; align-items: center; justify-content: center; gap: 4px; font-size: 13px; }
.mark { position: absolute; right: 10px; bottom: 9px; display: flex; align-items: center; opacity: .85; }
.mark div { display: flex; flex-direction: column; }
.mark b { font-size: 21px; line-height: 22px; color: #4f8bcb; }
.mark span { font: 700 16px/18px "Liberation Sans", sans-serif; color: #4dbd6c; }
```
FILE: grid.js
```
const fruits = [["苹果", 31], ["火龙果", 53], ["梨子", 14], ["橘子", 64]];
const data = [["产品", "数量"], ...fruits, ...fruits, ...fruits];
const letters = "ABCDEFGHIJKLMN".split("");

document.getElementById("cols").innerHTML =
  '<th class="corner"><svg viewBox="0 0 10 10"><path d="M10 0v10H0z" fill="#777"/></svg></th>' +
  letters.map(l => `<th class="${l === "B" || l === "C" ? "hot" : ""}">${l}</th>`).join("");

let html = "";
for (let r = 1; r <= 27; r++) {
  const used = data[r - 1];
  html += `<tr><th class="${used ? "hot" : ""}">${r}</th>`;
  letters.forEach((l, c) => {
    const cls = [];
    let text = "";
    if (used && l === "A" && r % 4 !== 1) cls.push("open");
    if (used && (c === 1 || c === 2)) {
      text = used[c - 1];
      cls.push("pick-c");
      if (r === 1 && c === 1) cls.push("active");
      if (typeof text === "number") cls.push("num");
    }
    html += `<td class="${cls.join(" ")}">${text}</td>`;
  });
  html += "</tr>";
}
document.getElementById("rows").innerHTML = html;
```
